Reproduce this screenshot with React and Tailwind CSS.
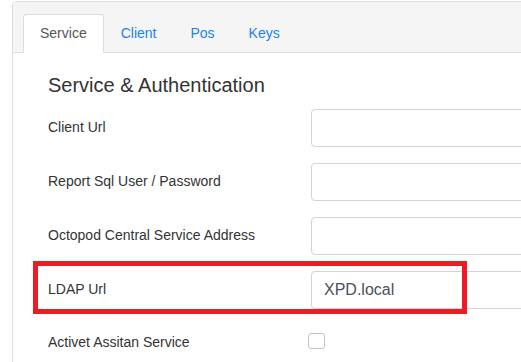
import React from 'react';

const tabs = ['Service', 'Client', 'Pos', 'Keys'];

const fields = [
  { label: 'Client Url', value: '' },
  { label: 'Report Sql User / Password', value: '' },
  { label: 'Octopod Central Service Address', value: '' },
  { label: 'LDAP Url', value: 'XPD.local' },
];

export default function App() {
  return (
    <div className="relative h-[362px] overflow-hidden bg-white pl-[12px] pt-px font-['Liberation_Sans',Arial,sans-serif]">
      <div className="w-[620px] rounded-tl-[4px] border border-[#dddddd] bg-white pb-10">
        {/* Tab bar */}
        <div className="flex h-[51px] items-end border-b border-[#dddddd] bg-[#f5f5f5] pl-[10px]">
          {tabs.map((t, i) => (
            <div
              key={t}
              className={`-mb-px flex h-[39px] items-center rounded-t-[4px] border px-4 text-[14px] ${
                i === 0
                  ? 'border-[#dddddd] border-b-white bg-white text-[#555555]'
                  : 'border-transparent text-[#1a82f0]'
              }`}
            >
              {t}
            </div>
          ))}
        </div>

        {/* Body */}
        <div className="pl-[35px] pt-[20px]">
          <h2 className="text-[20px] leading-[24px] text-[#333333]">Service &amp; Authentication</h2>

          <div className="mt-[12px] grid grid-cols-[263px_300px] items-center gap-y-4">
            {fields.map((f) => (
              <React.Fragment key={f.label}>
                <label className="-mt-[2px] text-[14px] text-[#333333]">{f.label}</label>
                <div className="flex h-[38px] items-center rounded-[4px] border border-[#ced4da] px-3 text-[16px] text-[#495057]">
                  {f.value}
                </div>
              </React.Fragment>
            ))}
          </div>

          <div className="mt-[16px] flex h-[34px] items-center">
            <label className="w-[260px] text-[14px] text-[#333333]">Activet Assitan Service</label>
            <span className="-mt-[3px] h-[16px] w-[17px] rounded-[3px] border border-[#c4c4c4] bg-white" />
          </div>
        </div>
      </div>

      {/* Red annotation box */}
      <div className="absolute left-[33px] top-[261px] h-[53px] w-[434px] border-[5px] border-[#ed1c24]" />
    </div>
  );
}
